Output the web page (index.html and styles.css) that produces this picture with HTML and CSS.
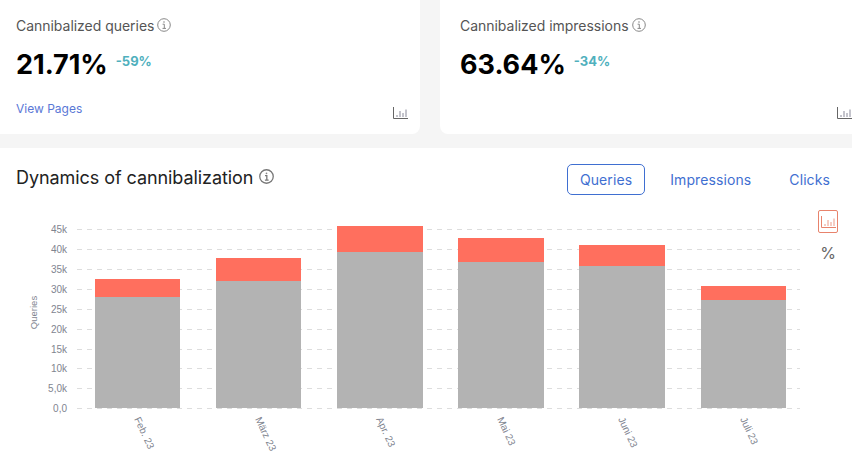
FILE: index.html
```html
<!DOCTYPE html>
<html lang="en">
<head>
    <meta charset="UTF-8">
    <title>Cannibalization</title>
    <link rel="stylesheet" href="styles.css">
</head>
<body>
    <div class="cards">
        <div class="card">
            <div class="card-label">Cannibalized queries
                <svg class="info" viewBox="0 0 14 14"><circle cx="7" cy="7" r="6.3"/><path d="M5.6 6.2H7.3V10.4M5.5 10.4H9"/><circle class="dot" cx="7" cy="4" r=".8"/></svg>
            </div>
            <div class="card-value">21.71%<span class="card-delta">-59%</span></div>
            <div class="card-foot">
                <a class="card-link" href="#">View Pages</a>
                <svg class="bars-icon" viewBox="0 0 15 12"><path d="M.5 0V11.5H15"/><path class="thin" d="M4 10V8M7 10V4M10 10V6M13 10V2.5"/></svg>
            </div>
        </div>
        <div class="card card-wide">
            <div class="card-label">Cannibalized impressions
                <svg class="info" viewBox="0 0 14 14"><circle cx="7" cy="7" r="6.3"/><path d="M5.6 6.2H7.3V10.4M5.5 10.4H9"/><circle class="dot" cx="7" cy="4" r=".8"/></svg>
            </div>
            <div class="card-value">63.64%<span class="card-delta">-34%</span></div>
            <div class="card-foot card-foot-end">
                <svg class="bars-icon" viewBox="0 0 15 12"><path d="M.5 0V11.5H15"/><path class="thin" d="M4 10V8M7 10V4M10 10V6M13 10V2.5"/></svg>
            </div>
        </div>
    </div>

    <div class="panel">
        <div class="panel-head">
            <h2 class="panel-title">Dynamics of cannibalization
                <svg class="info info-big" viewBox="0 0 14 14"><circle cx="7" cy="7" r="6.3"/><path d="M5.6 6.2H7.3V10.4M5.5 10.4H9"/><circle class="dot" cx="7" cy="4" r=".8"/></svg>
            </h2>
            <div class="tabs">
                <button class="tab tab-active">Queries</button>
                <button class="tab">Impressions</button>
                <button class="tab">Clicks</button>
            </div>
        </div>
        <div class="chart-row">
            <svg class="chart" viewBox="0 0 810 245" width="810" height="245">
                <g class="grid">
                    <line x1="77" x2="800" y1="19.5" y2="19.5"/>
                    <line x1="77" x2="800" y1="39.5" y2="39.5"/>
                    <line x1="77" x2="800" y1="59.5" y2="59.5"/>
                    <line x1="77" x2="800" y1="79.5" y2="79.5"/>
                    <line x1="77" x2="800" y1="99.5" y2="99.5"/>
                    <line x1="77" x2="800" y1="119.5" y2="119.5"/>
                    <line x1="77" x2="800" y1="139.5" y2="139.5"/>
                    <line x1="77" x2="800" y1="158.5" y2="158.5"/>
                    <line x1="77" x2="800" y1="178.5" y2="178.5"/>
                    <line x1="77" x2="800" y1="198.5" y2="198.5"/>
                </g>
                <g class="y-labels">
                    <text x="67" y="23">45k</text>
                    <text x="67" y="43">40k</text>
                    <text x="67" y="63">35k</text>
                    <text x="67" y="83">30k</text>
                    <text x="67" y="103">25k</text>
                    <text x="67" y="123">20k</text>
                    <text x="67" y="143">15k</text>
                    <text x="67" y="162">10k</text>
                    <text x="67" y="182">5,0k</text>
                    <text x="67" y="202">0,0</text>
                </g>
                <text class="y-title" transform="translate(37 102.5) rotate(-90)" text-anchor="middle">Queries</text>
                <g class="bar-low">
                    <rect x="95" y="87" width="85" height="111"/>
                    <rect x="216" y="71" width="85" height="127"/>
                    <rect x="337" y="42" width="86" height="156"/>
                    <rect x="458" y="52" width="86" height="146"/>
                    <rect x="579" y="56" width="86" height="142"/>
                    <rect x="701" y="90" width="85" height="108"/>
                </g>
                <g class="bar-high">
                    <rect x="95" y="69" width="85" height="18"/>
                    <rect x="216" y="48" width="85" height="23"/>
                    <rect x="337" y="16" width="86" height="26"/>
                    <rect x="458" y="28" width="86" height="24"/>
                    <rect x="579" y="35" width="86" height="21"/>
                    <rect x="701" y="76" width="85" height="14"/>
                </g>
                <g class="x-labels">
                    <text transform="translate(134 209) rotate(65)">Feb. 23</text>
                    <text transform="translate(255 209) rotate(65)">März 23</text>
                    <text transform="translate(376 209) rotate(65)">Apr. 23</text>
                    <text transform="translate(497 209) rotate(65)">Mai 23</text>
                    <text transform="translate(618 209) rotate(65)">Juni 23</text>
                    <text transform="translate(740 209) rotate(65)">Juli 23</text>
                </g>
            </svg>
            <div class="chart-tools">
                <div class="tool tool-active">
                    <svg viewBox="0 0 15 12"><path d="M.5 0V11.5H15"/><path class="thin" d="M4 10V8M7 10V4M10 10V6M13 10V2.5"/></svg>
                </div>
                <div class="tool-percent">%</div>
            </div>
        </div>
    </div>
</body>
</html>
```

FILE: styles.css
```css
body {
    margin: 0;
    width: 852px;
    height: 455px;
    overflow: hidden;
    background-color: #fff;
    font-family: Inter, 'Liberation Sans', sans-serif;
    color: #333;
}
.cards {
    display: flex;
    gap: 20px;
    height: 134px;
    padding-bottom: 14px;
    background-color: #f5f5f5;
    overflow: hidden;
}
.card {
    flex: 0 0 420px;
    box-sizing: border-box;
    height: 134px;
    padding: 16px 12px 0 16px;
    background-color: #fff;
    border-radius: 0 0 8px 0;
}
.card-wide {
    flex: 0 0 412px;
    padding-left: 20px;
    padding-right: 0;
    border-radius: 0 0 0 8px;
}
.card-label {
    display: flex;
    align-items: center;
    gap: 3px;
    height: 18px;
    font-size: 14px;
    letter-spacing: -0.03px;
    color: #555;
}
.info {
    width: 14px;
    height: 14px;
    fill: none;
    stroke: #888;
    stroke-width: 1;
}
.info .dot {
    fill: #888;
    stroke: none;
}
.card-value {
    display: flex;
    align-items: flex-start;
    margin-top: 12px;
    height: 37px;
    font-size: 27px;
    line-height: 37px;
    font-weight: 700;
    color: #000;
}
.card-delta {
    margin: 6px 0 0 8px;
    font-size: 13px;
    line-height: 18px;
    font-weight: 700;
    color: #4fb0bd;
}
.card-foot {
    display: flex;
    justify-content: space-between;
    align-items: flex-end;
    margin-top: 14px;
    height: 22px;
}
.card-foot-end {
    justify-content: flex-end;
}
.card-link {
    margin-bottom: 3px;
    font-size: 12px;
    color: #5a78d6;
    text-decoration: none;
}
.bars-icon {
    width: 15px;
    height: 12px;
    fill: none;
    stroke: #666;
    stroke-width: 1;
}
.thin {
    stroke: #8a8a9a;
}
.panel {
    background-color: #fff;
}
.panel-head {
    display: flex;
    justify-content: space-between;
    align-items: flex-start;
    box-sizing: border-box;
    height: 62px;
    padding: 16px 9px 0 16px;
}
.panel-title {
    display: flex;
    align-items: center;
    gap: 6px;
    margin: 0;
    height: 26px;
    font-size: 18px;
    font-weight: 400;
    letter-spacing: -0.07px;
    color: #222;
}
.info-big {
    width: 15px;
    height: 15px;
    margin-bottom: 1px;
    stroke: #777;
    stroke-width: 1.2;
}
.tabs {
    display: flex;
    gap: 12px;
}
.tab {
    height: 31px;
    padding: 0 12px;
    background: none;
    border: 1px solid transparent;
    border-radius: 5px;
    font-family: inherit;
    font-size: 14px;
    letter-spacing: 0.1px;
    color: #3f6fd1;
}
.tab-active {
    border-color: #3f6fd1;
}
.chart-row {
    display: flex;
}
.chart {
    display: block;
    flex: none;
}
.chart text {
    font-family: 'Liberation Sans', Arial, sans-serif;
}
.grid line {
    stroke: #ddd;
    stroke-width: 1;
    stroke-dasharray: 5 5;
}
.y-labels text {
    font-size: 10px;
    fill: #7f8590;
    text-anchor: end;
}
.y-title {
    font-size: 9.5px;
    fill: #7f8590;
}
.bar-low rect {
    fill: #b3b3b3;
}
.bar-high rect {
    fill: #ff6f5e;
}
.x-labels text {
    font-size: 10px;
    fill: #7f8590;
}
.chart-tools {
    display: flex;
    flex-direction: column;
    align-items: center;
    gap: 10px;
    width: 20px;
    margin-left: 8px;
}
.tool {
    display: flex;
    justify-content: center;
    align-items: center;
    box-sizing: border-box;
    width: 20px;
    height: 23px;
    border: 1px solid #e8836c;
    border-radius: 2px;
}
.tool svg {
    width: 15px;
    height: 12px;
    fill: none;
    stroke: #e8836c;
    stroke-width: 1;
}
.tool svg .thin {
    stroke: #eb9a88;
}
.tool-percent {
    font-size: 16px;
    line-height: 20px;
    color: #666;
}
```
